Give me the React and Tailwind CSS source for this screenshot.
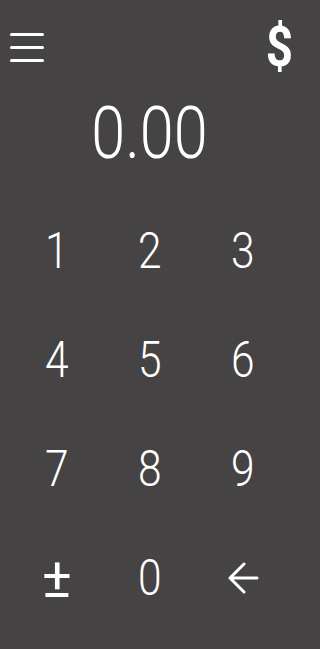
import { useState } from "react";

const keys = ["1", "2", "3", "4", "5", "6", "7", "8", "9", "±", "0", "back"];

function BackArrow() {
  return (
    <svg width="32" height="34" viewBox="0 0 32 34" fill="none">
      <path
        d="M30 17H3M17 3L3 17l14 14"
        stroke="white"
        strokeWidth="3"
        strokeLinecap="round"
        strokeLinejoin="round"
      />
    </svg>
  );
}

export default function App() {
  const [value, setValue] = useState("0.00");

  return (
    <div className="min-h-[649px] w-full bg-[#454344]">
      <div
        className="h-[649px] w-[300px] bg-[#454344] text-white flex flex-col select-none"
        style={{ fontFamily: "Roboto, 'Noto Sans', sans-serif" }}
      >
        {/* header */}
        <div className="h-[94px] flex items-center justify-between pl-[10px] pr-[7px]">
          <button className="flex flex-col gap-[10px] w-[34px]">
            <span className="block h-[3px] w-full rounded-full bg-white" />
            <span className="block h-[3px] w-full rounded-full bg-white" />
            <span className="block h-[3px] w-full rounded-full bg-white" />
          </button>
          <span className="text-[56px] leading-none font-bold scale-x-85 origin-right">$</span>
        </div>

        {/* amount */}
        <div className="h-[102px] flex items-start justify-center pt-[4px]">
          <span className="text-[72px] leading-none font-[350] scale-x-85">{value}</span>
        </div>

        {/* keypad */}
        <div className="grid grid-cols-3 px-[10px]">
          {keys.map((k) => (
            <button
              key={k}
              onClick={() => {
                if (k === "back") setValue("0.00");
              }}
              className="h-[109px] flex items-center justify-center text-[50px] leading-none font-[350]"
            >
              {k === "back" ? (
                <BackArrow />
              ) : k === "±" ? (
                <span className="text-[56px] font-normal">{k}</span>
              ) : (
                <span className="scale-x-85">{k}</span>
              )}
            </button>
          ))}
        </div>
      </div>
    </div>
  );
}
